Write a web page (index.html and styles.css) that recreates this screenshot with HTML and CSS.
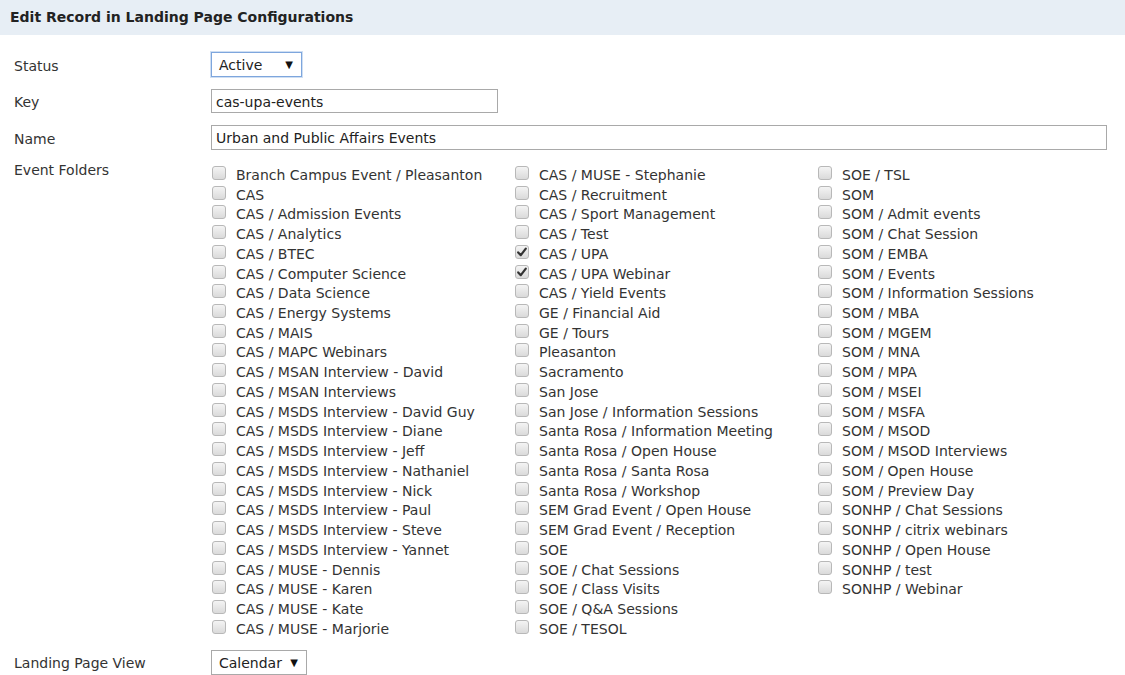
FILE: index.html
```html
<!DOCTYPE html>
<html>
<head>
<meta charset="utf-8">
<link rel="stylesheet" href="styles.css">
</head>
<body>
<div class="header">Edit Record in Landing Page Configurations</div>
<div class="form">
  <div class="label">Status</div>
  <div class="field"><span class="select sel-status focus">Active<span class="arrow">▼</span></span></div>

  <div class="label">Key</div>
  <div class="field"><input class="text key" type="text" value="cas-upa-events"></div>

  <div class="label">Name</div>
  <div class="field"><input class="text name" type="text" value="Urban and Public Affairs Events"></div>

  <div class="label lbl-folders">Event Folders</div>
  <div class="field folders">
    <div class="col">
      <div class="cb"><span class="box"></span>Branch Campus Event / Pleasanton</div>
      <div class="cb"><span class="box"></span>CAS</div>
      <div class="cb"><span class="box"></span>CAS / Admission Events</div>
      <div class="cb"><span class="box"></span>CAS / Analytics</div>
      <div class="cb"><span class="box"></span>CAS / BTEC</div>
      <div class="cb"><span class="box"></span>CAS / Computer Science</div>
      <div class="cb"><span class="box"></span>CAS / Data Science</div>
      <div class="cb"><span class="box"></span>CAS / Energy Systems</div>
      <div class="cb"><span class="box"></span>CAS / MAIS</div>
      <div class="cb"><span class="box"></span>CAS / MAPC Webinars</div>
      <div class="cb"><span class="box"></span>CAS / MSAN Interview - David</div>
      <div class="cb"><span class="box"></span>CAS / MSAN Interviews</div>
      <div class="cb"><span class="box"></span>CAS / MSDS Interview - David Guy</div>
      <div class="cb"><span class="box"></span>CAS / MSDS Interview - Diane</div>
      <div class="cb"><span class="box"></span>CAS / MSDS Interview - Jeff</div>
      <div class="cb"><span class="box"></span>CAS / MSDS Interview - Nathaniel</div>
      <div class="cb"><span class="box"></span>CAS / MSDS Interview - Nick</div>
      <div class="cb"><span class="box"></span>CAS / MSDS Interview - Paul</div>
      <div class="cb"><span class="box"></span>CAS / MSDS Interview - Steve</div>
      <div class="cb"><span class="box"></span>CAS / MSDS Interview - Yannet</div>
      <div class="cb"><span class="box"></span>CAS / MUSE - Dennis</div>
      <div class="cb"><span class="box"></span>CAS / MUSE - Karen</div>
      <div class="cb"><span class="box"></span>CAS / MUSE - Kate</div>
      <div class="cb"><span class="box"></span>CAS / MUSE - Marjorie</div>
    </div>
    <div class="col">
      <div class="cb"><span class="box"></span>CAS / MUSE - Stephanie</div>
      <div class="cb"><span class="box"></span>CAS / Recruitment</div>
      <div class="cb"><span class="box"></span>CAS / Sport Management</div>
      <div class="cb"><span class="box"></span>CAS / Test</div>
      <div class="cb"><span class="box checked"><svg viewBox="0 0 14 14" width="14" height="14"><path d="M3.2 7.4 L5.8 10.2 L10.8 3.6" fill="none" stroke="#333" stroke-width="2.2" stroke-linecap="round" stroke-linejoin="round"/></svg></span>CAS / UPA</div>
      <div class="cb"><span class="box checked"><svg viewBox="0 0 14 14" width="14" height="14"><path d="M3.2 7.4 L5.8 10.2 L10.8 3.6" fill="none" stroke="#333" stroke-width="2.2" stroke-linecap="round" stroke-linejoin="round"/></svg></span>CAS / UPA Webinar</div>
      <div class="cb"><span class="box"></span>CAS / Yield Events</div>
      <div class="cb"><span class="box"></span>GE / Financial Aid</div>
      <div class="cb"><span class="box"></span>GE / Tours</div>
      <div class="cb"><span class="box"></span>Pleasanton</div>
      <div class="cb"><span class="box"></span>Sacramento</div>
      <div class="cb"><span class="box"></span>San Jose</div>
      <div class="cb"><span class="box"></span>San Jose / Information Sessions</div>
      <div class="cb"><span class="box"></span>Santa Rosa / Information Meeting</div>
      <div class="cb"><span class="box"></span>Santa Rosa / Open House</div>
      <div class="cb"><span class="box"></span>Santa Rosa / Santa Rosa</div>
      <div class="cb"><span class="box"></span>Santa Rosa / Workshop</div>
      <div class="cb"><span class="box"></span>SEM Grad Event / Open House</div>
      <div class="cb"><span class="box"></span>SEM Grad Event / Reception</div>
      <div class="cb"><span class="box"></span>SOE</div>
      <div class="cb"><span class="box"></span>SOE / Chat Sessions</div>
      <div class="cb"><span class="box"></span>SOE / Class Visits</div>
      <div class="cb"><span class="box"></span>SOE / Q&amp;A Sessions</div>
      <div class="cb"><span class="box"></span>SOE / TESOL</div>
    </div>
    <div class="col">
      <div class="cb"><span class="box"></span>SOE / TSL</div>
      <div class="cb"><span class="box"></span>SOM</div>
      <div class="cb"><span class="box"></span>SOM / Admit events</div>
      <div class="cb"><span class="box"></span>SOM / Chat Session</div>
      <div class="cb"><span class="box"></span>SOM / EMBA</div>
      <div class="cb"><span class="box"></span>SOM / Events</div>
      <div class="cb"><span class="box"></span>SOM / Information Sessions</div>
      <div class="cb"><span class="box"></span>SOM / MBA</div>
      <div class="cb"><span class="box"></span>SOM / MGEM</div>
      <div class="cb"><span class="box"></span>SOM / MNA</div>
      <div class="cb"><span class="box"></span>SOM / MPA</div>
      <div class="cb"><span class="box"></span>SOM / MSEI</div>
      <div class="cb"><span class="box"></span>SOM / MSFA</div>
      <div class="cb"><span class="box"></span>SOM / MSOD</div>
      <div class="cb"><span class="box"></span>SOM / MSOD Interviews</div>
      <div class="cb"><span class="box"></span>SOM / Open House</div>
      <div class="cb"><span class="box"></span>SOM / Preview Day</div>
      <div class="cb"><span class="box"></span>SONHP / Chat Sessions</div>
      <div class="cb"><span class="box"></span>SONHP / citrix webinars</div>
      <div class="cb"><span class="box"></span>SONHP / Open House</div>
      <div class="cb"><span class="box"></span>SONHP / test</div>
      <div class="cb"><span class="box"></span>SONHP / Webinar</div>
    </div>
  </div>

  <div class="label lbl-view">Landing Page View</div>
  <div class="field"><span class="select sel-view">Calendar<span class="arrow">▼</span></span></div>
</div>
</body>
</html>
```

FILE: styles.css
```css
html, body {
  margin: 0;
  padding: 0;
  background: #fff;
}
body {
  font-family: "DejaVu Sans", Verdana, sans-serif;
  font-size: 14px;
  color: #333;
}
.header {
  height: 35px;
  box-sizing: border-box;
  background: #e7eef5;
  padding: 8px 0 0 10px;
  font-weight: bold;
  font-size: 14px;
  color: #222;
  line-height: 18px;
}
.form {
  display: grid;
  grid-template-columns: 197px 1fr;
  row-gap: 12px;
  padding: 17px 18px 0 14px;
  align-items: center;
}
.label {
  line-height: 16px;
  color: #333;
  position: relative;
  top: 1px;
}
.lbl-folders {
  align-self: start;
  top: 0;
}
.field {
  display: flex;
  align-items: center;
}
.select {
  position: relative;
  display: inline-flex;
  align-items: center;
  box-sizing: border-box;
  height: 25px;
  padding: 1px 0 0 7px;
  border: 1px solid #a9a9a9;
  background: #fff;
  color: #222;
}
.select.focus {
  border-color: #7ea6dd;
  box-shadow: 0 0 0 1px #cfdff3;
}
.sel-status { width: 91px; }
.sel-view { width: 96px; }
.arrow {
  position: absolute;
  right: 8px;
  top: 5px;
  font-size: 10px;
  line-height: 14px;
  color: #111;
}
.text {
  box-sizing: border-box;
  height: 25px;
  border: 1px solid #a9a9a9;
  padding: 1px 4px 0;
  font-family: inherit;
  font-size: 14px;
  color: #222;
  outline: none;
  margin: 0;
}
.key { width: 287px; height: 24px; }
.name { width: 896px; }
.folders {
  display: grid;
  grid-template-columns: 303px 303px 303px;
  align-items: start;
  margin-top: 2px;
}
.col {
  display: flex;
  flex-direction: column;
}
.cb {
  display: flex;
  align-items: center;
  height: 19.74px;
  white-space: nowrap;
  color: #333;
  position: relative;
  top: 1px;
}
.box {
  flex: none;
  box-sizing: border-box;
  width: 14px;
  height: 14px;
  margin: 0 10px 0 1px;
  border: 1px solid #b8b8b8;
  border-radius: 3px;
  background: linear-gradient(#f4f4f4, #dadada);
  position: relative;
  top: -2px;
}
.box svg {
  display: block;
  margin: -1px 0 0 -1px;
}
```
